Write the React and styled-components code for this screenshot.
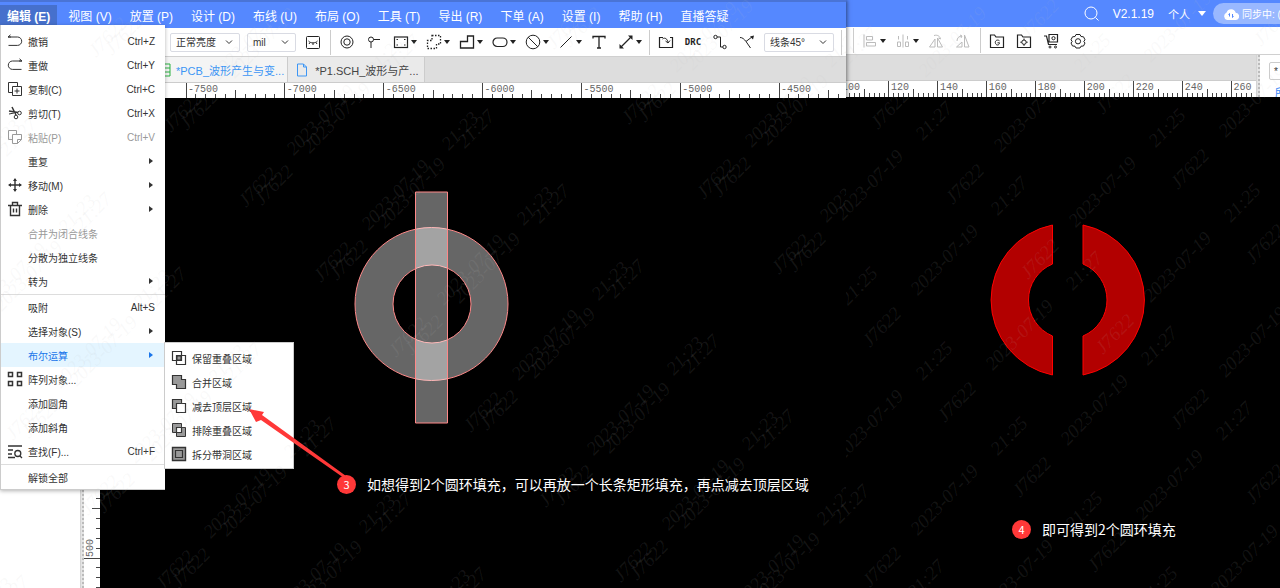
import React from 'react'
import styled, { createGlobalStyle, css } from 'styled-components'

const menuBar = [
  '编辑 (E)',
  '视图 (V)',
  '放置 (P)',
  '设计 (D)',
  '布线 (U)',
  '布局 (O)',
  '工具 (T)',
  '导出 (R)',
  '下单 (A)',
  '设置 (I)',
  '帮助 (H)',
  '直播答疑',
]

const editMenu = [
  [
    { label: '撤销', icon: 'undo', keys: 'Ctrl+Z' },
    { label: '重做', icon: 'redo', keys: 'Ctrl+Y' },
    { label: '复制(C)', icon: 'copy', keys: 'Ctrl+C' },
    { label: '剪切(T)', icon: 'cut', keys: 'Ctrl+X' },
    { label: '粘贴(P)', icon: 'paste', keys: 'Ctrl+V', disabled: true },
    { label: '重复', more: true },
    { label: '移动(M)', icon: 'move', more: true },
    { label: '删除', icon: 'trash', more: true },
    { label: '合并为闭合线条', disabled: true },
    { label: '分散为独立线条' },
    { label: '转为', more: true },
  ],
  [
    { label: '吸附', keys: 'Alt+S' },
    { label: '选择对象(S)', more: true },
    { label: '布尔运算', more: true, active: true },
    { label: '阵列对象...', icon: 'array' },
    { label: '添加圆角' },
    { label: '添加斜角' },
    { label: '查找(F)...', icon: 'find', keys: 'Ctrl+F' },
  ],
  [{ label: '解锁全部' }],
]

const booleanMenu = [
  { label: '保留重叠区域', icon: 'intersect' },
  { label: '合并区域', icon: 'union' },
  { label: '减去顶层区域', icon: 'subtract' },
  { label: '排除重叠区域', icon: 'exclude' },
  { label: '拆分带洞区域', icon: 'split' },
]

const icons = {
  undo: <path d="M1 4h9.5a4.2 4.2 0 0 1 0 8.4H1.5M1 4l2.5-2.200M1 4h3" />,
  redo: <path d="M15 4H5.500a4.200 4.200 0 0 0 0 8.400H14.500M15 4l-2.500-2.200M15 4h-3" />,
  copy: <path d="M5 11.5H1.5v-10h9V5M5.5 5.5h9v9h-9zM10 7.5v5M7.5 10h5" />,
  cut: (
    <>
      <path d="M5 2l4 8M2 6l9 1.500" strokeWidth="1.5" />
      <circle cx="12.5" cy="8" r="1.8" />
      <circle cx="9" cy="12" r="1.8" />
      <path d="M2 9l5-1" />
    </>
  ),
  paste: (
    <path d="M5 10.5H1.500v-9h8V5M5.500 5.500h9v5l-4 4h-5zM14.500 10.500h-4v4" />
  ),
  move: (
    <>
      <path d="M8 2v12M2 8h12" strokeWidth="1.4" />
      <path
        d="M8 1l2 3H6zM8 15l2-3H6zM1 8l3-2v4zM15 8l-3-2v4z"
        fill="currentColor"
        stroke="none"
      />
    </>
  ),
  trash: (
    <path
      d="M1 4.5h14M5.5 4V1.500h5V4M3.500 5v9.500h9V5M6.500 7.500v4M9.500 7.500v4"
      strokeWidth="1.4"
    />
  ),
  array: (
    <path
      d="M1.5 1.5h4v4h-4zM10.5 1.5h4v4h-4zM1.5 10.5h4v4h-4zM10.5 10.5h4v4h-4z"
      strokeWidth="1.5"
    />
  ),
  find: (
    <>
      <path d="M1 3h14M1 7h5M1 11h4M1 14.5h7M13 13l2 2" strokeWidth="1.3" />
      <circle cx="10.8" cy="10.5" r="3" strokeWidth="1.3" />
    </>
  ),
  intersect: (
    <>
      <path d="M6 6h4v4H6z" fill="#999" />
      <path d="M1.5 1.5h9v9h-9zM5.5 5.5h9v9h-9z" strokeWidth="1.2" />
    </>
  ),
  union: (
    <path d="M1.5 1.5h9v4h4v9h-9v-4h-4z" fill="#999" strokeWidth="1.2" />
  ),
  subtract: (
    <>
      <path d="M1.5 1.5h9v9h-9z" fill="#999" strokeWidth="1.2" />
      <path d="M5.5 5.5h9v9h-9z" fill="#fff" strokeWidth="1.2" />
    </>
  ),
  exclude: (
    <>
      <path d="M1.5 1.5h9v9h-9zM5.5 5.5h9v9h-9z" fill="#999" />
      <path d="M5.5 5.5h5v5h-5z" fill="#fff" strokeWidth="1.2" />
    </>
  ),
  split: (
    <>
      <path d="M1.5 1.5h13v13h-13z" fill="#999" strokeWidth="1.4" />
      <path d="M4.5 4.5h7v7h-7z" strokeWidth="1.2" />
    </>
  ),
  image: (
    <>
      <rect x="1.5" y="2.5" width="13" height="12" rx="1" />
      <path d="M3.5 7c2 2.5 7 2.5 9 0M5 8.5L4 10M8 9v2M11 8.5l1 1.5" />
    </>
  ),
  pad: (
    <>
      <circle cx="8" cy="8" r="6" />
      <circle cx="8" cy="8" r="3.2" />
    </>
  ),
  via: (
    <>
      <circle cx="5" cy="5.5" r="2.5" />
      <path d="M5 8v6M7.5 5.5H14" />
    </>
  ),
  region: (
    <>
      <rect x="1.5" y="3" width="13" height="10.5" strokeWidth="1.2" />
      <path
        d="M3.5 5.5h1.500M11 5.500h1.500M3.500 11h1.500M11 11h1.500"
        strokeWidth="1.2"
      />
    </>
  ),
  keepout: (
    <path
      d="M6 1.5h8.500v8.500h-4v4.500h-9V6.500h4.500z"
      strokeDasharray="1.500 1.500"
      strokeWidth="1.3"
    />
  ),
  fill: <path d="M8.5 2h6v12h-13V7.5h7z" strokeWidth="1.3" />,
  oval: <rect x="1" y="4" width="14" height="8.5" rx="4.2" strokeWidth="1.2" />,
  ban: (
    <>
      <circle cx="8" cy="8" r="6.8" />
      <path d="M3.2 3.2l9.6 9.6" />
    </>
  ),
  line: <path d="M2.5 13.5l11-11" />,
  text: <path d="M2 4.500v-2h12v2M8 2.500v11.500M6 14h4" strokeWidth="1.3" />,
  dimension: (
    <>
      <path d="M3 13L13 3" strokeWidth="1.3" />
      <path
        d="M1.500 14.500v-4.500l4.500 4.500zM14.500 1.500v4.500L10 1.500z"
        fill="currentColor"
        stroke="none"
      />
    </>
  ),
  importBox: (
    <>
      <path d="M5 3.5H1.5v10h13v-10H12" strokeWidth="1.2" />
      <path d="M4.500 5c2.500-2 5 0 5.500 3.500M10 9L7.500 7M10 9l2-2.500" />
    </>
  ),
  route: (
    <>
      <circle cx="3.5" cy="3" r="1.7" />
      <circle cx="12.5" cy="13" r="1.7" />
      <path d="M5.2 3h3.3v10h2.3" />
    </>
  ),
  stretch: (
    <>
      <path d="M1 3.500c2.500 0 4 1.500 6 4l4.500 6.500M7 7.500L13.500 2.500" />
      <path d="M15 1.500l-1 4-3-3z" fill="currentColor" stroke="none" />
    </>
  ),
  align: <path d="M2 1.5v13M4.5 3.5h6V7h-6zM4.5 9.5h9V13h-9z" />,
  distribute: (
    <path d="M8 1.5v13M2.5 9h3v4.5h-3zM10.5 9h3v4.5h-3zM3.5 6.5V3M12.5 6.5V3" />
  ),
  flipH: (
    <path d="M7 14V6L1.5 14zM9.5 14h5L9.5 5zM6 2.5c4-1 6 1 6.5 3.5M12.5 6l-2-1" />
  ),
  flipV: (
    <path d="M9.5 14V2L14 14zM1.5 14H7V9zM2 8c0-3 2-5 5-5M5 2l2 1-1 2" />
  ),
  folderG: (
    <>
      <path d="M1.5 2h4L7 4h7.500v10.500h-13z" strokeWidth="1.2" />
      <path d="M10.500 7.800c-2.200-1.800-5 0-4 2.600s4 1.800 4-.6H8.500" />
    </>
  ),
  folderGear: (
    <>
      <path d="M1.5 2h4L7 4h7.500v10.500h-13z" strokeWidth="1.2" />
      <circle cx="8" cy="9.200" r="2.200" />
      <path d="M8 5.500V7M8 11.400v1.500M4.300 9.200h1.500M10.200 9.200h1.500" />
    </>
  ),
  cart: (
    <>
      <path d="M1 3h2.500l2 8.500H14M6 1.500h8.500V9H6z" strokeWidth="1.2" />
      <circle cx="10.500" cy="5.200" r="1.600" />
      <circle cx="7" cy="14" r="1" />
      <circle cx="12.500" cy="14" r="1" />
    </>
  ),
  gear: (
    <>
      <path
        d="M6 1.500h4l1 2 2.500.3 1.500 3-1.200 1.700L15 10l-1.500 3-2.500.2-1 1.800H6l-1-1.800L2.500 13 1 10l1.200-1.500L1 6.800l1.500-3L5 3.500z"
        strokeLinejoin="round"
      />
      <circle cx="8" cy="8.300" r="2.600" />
    </>
  ),
}

function Icon({ name }) {
  return (
    <Glyph width="16" height="16" viewBox="0 0 16 16" aria-hidden="true">
      {icons[name]}
    </Glyph>
  )
}

function Tool({ icon, title, more, muted }) {
  return (
    <ToolButton type="button" aria-label={title} $more={more} $muted={muted}>
      {icon === 'drc' ? <DrcText>DRC</DrcText> : <Icon name={icon} />}
      {more && <Caret />}
    </ToolButton>
  )
}

function Picker({ label, value, width }) {
  return (
    <PickerBox $width={width}>
      <select aria-label={label} defaultValue={value}>
        <option>{value}</option>
      </select>
      <svg width="8" height="8" viewBox="0 0 8 8" aria-hidden="true">
        <path d="M1 2.500l3 3 3-3" />
      </svg>
    </PickerBox>
  )
}

function Ruler({ first, step, start, by, height, count }) {
  const majors = Array.from({ length: count }, (_, i) => i)
  return (
    <RulerSvg height={height} aria-hidden="true">
      {majors.map((i) => {
        const x = first + i * step
        return (
          <g key={i}>
            <line x1={x} x2={x} y1="0" y2={height} />
            {[1, 2, 3, 4, 5, 6, 7, 8, 9].map((n) => (
              <line
                key={n}
                x1={x + (n * step) / 10}
                x2={x + (n * step) / 10}
                y1={height - (n === 5 ? 8 : 4)}
                y2={height}
              />
            ))}
            <text x={x + 2} y="9">
              {start + i * by}
            </text>
          </g>
        )
      })}
      <line x1="0" x2="100%" y1={height} y2={height} />
    </RulerSvg>
  )
}

function SideRuler() {
  const ticks = Array.from({ length: 60 }, (_, i) => i)
  return (
    <SideRulerSvg aria-hidden="true">
      {ticks.map((i) => {
        const y = 460 + (i - 46) * 9.87
        const size = (i - 46) % 10 === 0 ? 16 : (i - 41) % 10 === 0 ? 8 : 4
        return <line key={i} x1={16 - size} x2="16" y1={y} y2={y} />
      })}
      <text transform="translate(9 459) rotate(-90)">500</text>
    </SideRulerSvg>
  )
}

// Diagonal stamp repeated over the whole area
function Stamps({ x, y, time, right }) {
  const marks = []
  for (let row = -3; row <= 5; row++) {
    for (let i = -14; i <= 14; i++) {
      const cx = x + row * 233 + i * 75
      const cy = y - row * 233 + i * 75
      marks.push([cx, cy, 'J7622'])
      marks.push([cx + 48, cy - 52, '2023-07-19'])
      marks.push([cx + 128, cy - 132, time])
    }
  }
  return (
    <StampLayer aria-hidden="true">
      {marks
        .filter(([mx, my]) => mx > -30 && mx < right && my > 10 && my < 620)
        .map(([mx, my, text]) => (
          <text
            key={`${mx} ${my}`}
            transform={`translate(${mx} ${my}) rotate(-46)`}
          >
            {text}
          </text>
        ))}
    </StampLayer>
  )
}

function EditMenu() {
  return (
    <MenuPanel>
      {editMenu.map((group, i) => (
        <MenuGroup key={i}>
          {group.map((item) => (
            <li key={item.label}>
              <MenuItem
                type="button"
                disabled={item.disabled}
                $active={item.active}
              >
                <IconSlot>{item.icon && <Icon name={item.icon} />}</IconSlot>
                {item.label}
                {item.keys && <Keys>{item.keys}</Keys>}
                {item.more && <MoreArrow />}
              </MenuItem>
              {item.active && <BooleanMenu />}
            </li>
          ))}
        </MenuGroup>
      ))}
    </MenuPanel>
  )
}

function BooleanMenu() {
  return (
    <SubMenu>
      {booleanMenu.map((item) => (
        <li key={item.label}>
          <MenuItem type="button">
            <IconSlot>
              <Icon name={item.icon} />
            </IconSlot>
            {item.label}
          </MenuItem>
        </li>
      ))}
    </SubMenu>
  )
}

function EditorWindow() {
  return (
    <Editor>
      <MenuBar>
        {menuBar.map((name, i) => (
          <MenuBarButton type="button" key={name} $active={i === 0}>
            {name}
          </MenuBarButton>
        ))}
      </MenuBar>
      <Toolbar $inset>
        <Picker label="亮度" value="正常亮度" width={70} />
        <Picker label="单位" value="mil" width={49} />
        <Tool icon="image" title="图片" />
        <Divider />
        <Tool icon="pad" title="焊盘" />
        <Tool icon="via" title="过孔" />
        <Tool icon="region" title="区域" more />
        <Tool icon="keepout" title="禁止区域" more />
        <Tool icon="fill" title="填充" more />
        <Tool icon="oval" title="挖槽" more />
        <Tool icon="ban" title="禁止" more />
        <Tool icon="line" title="线条" more />
        <Tool icon="text" title="文本" />
        <Tool icon="dimension" title="尺寸" more />
        <Divider />
        <Tool icon="importBox" title="导入" />
        <Tool icon="drc" title="DRC" />
        <Tool icon="route" title="布线" />
        <Tool icon="stretch" title="拉伸" />
        <Picker label="拐角" value="线条45°" width={70} />
        <Divider />
      </Toolbar>
      <Tabs>
        <Tab type="button" $active>
          <svg width="14" height="14" viewBox="0 0 14 14" aria-hidden="true">
            <path d="M2 1h10v12H2zM4 5h8M4 9h8" stroke="#2bb040" />
          </svg>
          *PCB_波形产生与变...
        </Tab>
        <Tab type="button">
          <svg width="14" height="14" viewBox="0 0 14 14" aria-hidden="true">
            <path d="M2.500 1h6l3 3v9h-9zM8.500 1v3h3" stroke="#3d96f5" />
          </svg>
          *P1.SCH_波形与产...
        </Tab>
      </Tabs>
      <Ruler
        first={186}
        step={98.85}
        start={-7500}
        by={500}
        height={15}
        count={7}
      />
      <Workspace>
        <SidePanel />
        <Splitter />
        <SideRuler />
        <Canvas>
          <Drawing>
            <g fill="#fff" fillOpacity="0.4" stroke="#f88" fillRule="evenodd">
              <path d="M255 206a76 76 0 1 0 153 0a76 76 0 1 0-153 0zM293 206a39 39 0 1 0 78 0a39 39 0 1 0-78 0z" />
              <path d="M315.500 94h32v231h-32z" />
            </g>
            <path
              d="M149 311l15 3-2 3 84 61-2 2-83-58-5 2z"
              fill="#ff3838"
            />
          </Drawing>
          <Callout $x={237} $y={376}>
            <Badge>3</Badge>
            如想得到2个圆环填充，可以再放一个长条矩形填充，再点减去顶层区域
          </Callout>
        </Canvas>
      </Workspace>
      <EditMenu />
      <Stamps x={321} y={283} time="21:23" right={840} />
    </Editor>
  )
}

function ResultWindow() {
  return (
    <Result>
      <TitleBar>
        <svg width="15" height="15" viewBox="0 0 15 15" aria-hidden="true">
          <circle cx="7" cy="7" r="6" />
          <path d="M11.500 11.500l3 3" />
        </svg>
        <span>V2.1.19</span>
        <Account type="button">
          个人
          <Caret />
        </Account>
        <SyncPill>
          <svg width="16" height="12" viewBox="0 0 16 12" aria-hidden="true">
            <path
              d="M4 12a4 4 0 0 1-.4-7.500A4.800 4.800 0 0 1 12.700 4.800 3.600 3.600 0 0 1 12.300 12z"
              fill="#fff"
            />
            <path d="M6.500 8.500V5.500l-1 1.200M9.500 6v3.500l1-1.200" stroke="#58f" />
          </svg>
          同步中: (
        </SyncPill>
      </TitleBar>
      <Toolbar>
        <Divider />
        <Tool icon="align" title="对齐" more muted />
        <Tool icon="distribute" title="分布" more muted />
        <Tool icon="flipH" title="水平翻转" muted />
        <Tool icon="flipV" title="垂直翻转" muted />
        <Divider />
        <Tool icon="folderG" title="导出制板文件" />
        <Tool icon="folderGear" title="导出坐标" />
        <Tool icon="cart" title="下单" />
        <Tool icon="gear" title="设置" />
      </Toolbar>
      <ResultTop>
        <ResultMain>
          <TabSpace />
          <Ruler
            first={-6}
            step={48.95}
            start={100}
            by={20}
            height={16}
            count={9}
          />
        </ResultMain>
        <Splitter />
        <RightPanel>
          <PanelTab type="button">*</PanelTab>
          <PanelLink href="#all">所</PanelLink>
        </RightPanel>
      </ResultTop>
      <Canvas>
        <Drawing>
          <g fill="#b20000" stroke="#f00">
            <path d="M206.500 128A76.500 76.500 0 0 0 206.500 278V239A39 39 0 0 1 206.500 167z" />
            <path d="M237 128A76.500 76.500 0 0 1 237 278V239A39 39 0 0 0 237 167z" />
          </g>
        </Drawing>
        <Callout $x={166} $y={422}>
          <Badge>4</Badge>
          即可得到2个圆环填充
        </Callout>
      </Canvas>
      <Stamps x={32} y={130} time="21:25" right={430} />
    </Result>
  )
}

export default function App() {
  return (
    <Page>
      <GlobalStyle />
      <EditorWindow />
      <ResultWindow />
      <Stamps x={337} y={281} time="21:27" right={1275} />
    </Page>
  )
}

const GlobalStyle = createGlobalStyle`
  * {
    box-sizing: border-box;
  }
  body {
    margin: 0;
    background: #000;
    font-family: "Liberation Sans", "Noto Sans CJK SC", sans-serif;
    font-size: 12px;
    color: #333;
  }
  button, select {
    font: inherit;
    color: inherit;
    background: none;
    border: 0;
    padding: 0;
    margin: 0;
  }
  ul {
    list-style: none;
    margin: 0;
    padding: 0;
  }
`

const Page = styled.main`
  position: relative;
  display: grid;
  grid-template-columns: 423fr 217fr;
  min-height: 100vh;
  overflow: hidden;
`

const Editor = styled.section`
  position: relative;
  z-index: 1;
  display: flex;
  flex-direction: column;
  min-width: 0;
  box-shadow: 1px 0 4px rgba(0, 0, 0, 0.5);
`

const Result = styled.section`
  position: relative;
  display: flex;
  flex-direction: column;
  min-width: 0;
  overflow: hidden;
`

const MenuBar = styled.nav`
  display: flex;
  align-items: center;
  height: 28px;
  border-top: 2px solid #4a74d6;
  background: #58f;
  overflow: hidden;
`

const MenuBarButton = styled.button`
  flex: none;
  height: 20px;
  padding: 0 12px 0 6px;
  color: #fff;
  white-space: nowrap;
  ${(props) =>
    props.$active &&
    css`
      margin-right: 5px;
      padding: 0 7px;
      background: #4670cc;
      font-weight: bold;
    `}
`

const Toolbar = styled.div`
  display: flex;
  align-items: center;
  gap: 7px;
  height: ${(props) => (props.$inset ? 29 : 28)}px;
  padding-left: ${(props) => (props.$inset ? 170 : 7)}px;
  border-bottom: 1px solid #d0d0d0;
  background: #fff;
  overflow: hidden;
`

const ToolButton = styled.button`
  flex: none;
  display: flex;
  align-items: center;
  justify-content: ${(props) => (props.$more ? 'space-between' : 'center')};
  width: ${(props) => (props.$more ? 26 : 20)}px;
  height: 20px;
  padding-left: ${(props) => (props.$more ? 2 : 0)}px;
  color: ${(props) => (props.$muted ? '#bbb' : '#222')};
`

const Glyph = styled.svg`
  flex: none;
  fill: none;
  stroke: currentColor;
`

const DrcText = styled.span`
  font: bold 9px 'DejaVu Sans Mono', monospace;
`

const Caret = styled.span`
  border: 3px solid transparent;
  border-top: 4px solid #222;
  border-bottom: 0;
`

const Divider = styled.span`
  flex: none;
  width: 1px;
  height: 25px;
  margin-right: -1px;
  background: #ccc;
`

const PickerBox = styled.span`
  flex: none;
  display: flex;
  align-items: center;
  width: ${(props) => props.$width}px;
  height: 19px;
  padding: 0 6px 0 5px;
  border: 1px solid #d9dbe3;
  border-radius: 2px;
  font-size: 10px;
  select {
    flex: 1;
    min-width: 0;
    appearance: none;
    outline: 0;
  }
  svg {
    fill: none;
    stroke: #333;
  }
`

const Tabs = styled.div`
  display: flex;
  height: 26px;
  padding-left: 155px;
  border-bottom: 1px solid #ccc;
  background: #ddd;
`

const Tab = styled.button`
  display: flex;
  align-items: center;
  gap: 6px;
  padding: 0 5px 0 7px;
  border-right: 1px solid #ccc;
  font-size: 11px;
  white-space: nowrap;
  color: ${(props) => (props.$active ? '#3d96f5' : '#444')};
  background: ${(props) => (props.$active ? '#f4f4f4' : '#eaeaea')};
  ${(props) =>
    props.$active &&
    css`
      gap: 4px;
      padding: 0 3px;
    `}
  svg {
    fill: none;
  }
`

const RulerSvg = styled.svg`
  display: block;
  flex: none;
  width: 100%;
  background: #fff;
  shape-rendering: crispEdges;
  line {
    stroke: #444;
  }
  text {
    font: 10px 'Liberation Mono', monospace;
    fill: #666;
  }
`

const SideRulerSvg = styled(RulerSvg)`
  width: 16px;
  height: auto;
`

const Workspace = styled.div`
  flex: 1;
  display: flex;
`

const SidePanel = styled.aside`
  width: 80px;
  background: #fff;
`

const Splitter = styled.div`
  flex: none;
  width: 4px;
  background: #e4e4e4;
  border-left: 1px solid #d4d4d4;
  border-right: 2px dotted #bbb;
`

const Canvas = styled.div`
  position: relative;
  flex: 1;
  background: #000;
`

const Drawing = styled.svg`
  position: absolute;
  z-index: 3;
  top: 0;
  left: 0;
  width: 100%;
  height: 100%;
  pointer-events: none;
`

const Callout = styled.p`
  position: absolute;
  z-index: 3;
  top: ${(props) => props.$y}px;
  left: ${(props) => props.$x}px;
  display: flex;
  align-items: center;
  gap: 11px;
  margin: 0;
  font-family: 'Noto Sans CJK SC', sans-serif;
  font-size: 14px;
  line-height: 20px;
  color: #fff;
  white-space: nowrap;
`

const Badge = styled.span`
  width: 19px;
  height: 19px;
  border-radius: 50%;
  background: #ff3838;
  font-size: 11px;
  line-height: 18px;
  text-align: center;
`

const MenuPanel = styled.div`
  position: absolute;
  z-index: 2;
  top: 25px;
  left: 0;
  width: 165px;
  padding-top: 4px;
  border-left: 1px solid #ccc;
  border-bottom: 1px solid #ccc;
  background: #fff;
  box-shadow: 0 1px 4px rgba(0, 0, 0, 0.3);
  font-size: 10px;
`

const MenuGroup = styled.ul`
  & + & {
    margin-top: 1px;
    border-top: 1px solid #ddd;
  }
  li {
    position: relative;
  }
`

const MenuItem = styled.button`
  display: flex;
  align-items: center;
  width: 100%;
  height: 24px;
  padding-right: 10px;
  white-space: nowrap;
  color: ${(props) => (props.$active ? '#1a75ea' : '#333')};
  background: ${(props) => (props.$active ? '#e4f5ff' : 'transparent')};
  &:disabled {
    color: #999;
  }
`

const IconSlot = styled.span`
  display: flex;
  justify-content: center;
  width: 27px;
`

const Keys = styled.span`
  margin-left: auto;
`

const MoreArrow = styled.span`
  margin-left: auto;
  margin-right: 2px;
  border: 3px solid transparent;
  border-left: 4px solid currentColor;
  border-right: 0;
`

const SubMenu = styled.ul`
  position: absolute;
  top: -1px;
  left: 163px;
  width: 130px;
  padding: 3px 0 2px;
  border: 1px solid #ccc;
  background: #fff;
`

const TitleBar = styled.header`
  display: flex;
  align-items: center;
  justify-content: flex-end;
  gap: 14px;
  height: 27px;
  background: #58f;
  color: #fff;
  svg {
    flex: none;
    fill: none;
    stroke: #fff;
  }
`

const Account = styled.button`
  display: flex;
  align-items: center;
  gap: 8px;
  margin-right: -7px;
  font-size: 11px;
  ${Caret} {
    border: 4px solid transparent;
    border-top: 5px solid #fff;
    border-bottom: 0;
  }
`

const SyncPill = styled.div`
  display: flex;
  align-items: center;
  gap: 3px;
  width: 67px;
  height: 21px;
  padding-left: 10px;
  border-radius: 11px 0 0 11px;
  background: #99b8ff;
  font-size: 10px;
  white-space: nowrap;
  overflow: hidden;
  svg {
    stroke: none;
  }
`

const ResultTop = styled.div`
  display: flex;
  height: 42px;
`

const ResultMain = styled.div`
  flex: 1;
  min-width: 0;
`

const TabSpace = styled.div`
  height: 26px;
  background: #ddd;
  border-bottom: 1px solid #ccc;
`

const RightPanel = styled.aside`
  width: 20px;
  padding: 7px 0 0 9px;
  background: #fff;
  overflow: hidden;
`

const PanelTab = styled.button`
  display: block;
  width: 20px;
  height: 18px;
  padding-left: 4px;
  border: 1px solid #ccc;
  border-radius: 2px;
  font-size: 10px;
  text-align: left;
`

const PanelLink = styled.a`
  display: block;
  margin: 4px 0 0 6px;
  font-size: 11px;
  color: #3a86f5;
  text-decoration: none;
`

const StampLayer = styled.svg`
  position: absolute;
  z-index: 4;
  top: 0;
  left: 0;
  width: 100%;
  height: 100%;
  pointer-events: none;
  fill: #c0c0c0;
  fill-opacity: 0.1;
  font: italic 19px 'Liberation Serif', serif;
`
